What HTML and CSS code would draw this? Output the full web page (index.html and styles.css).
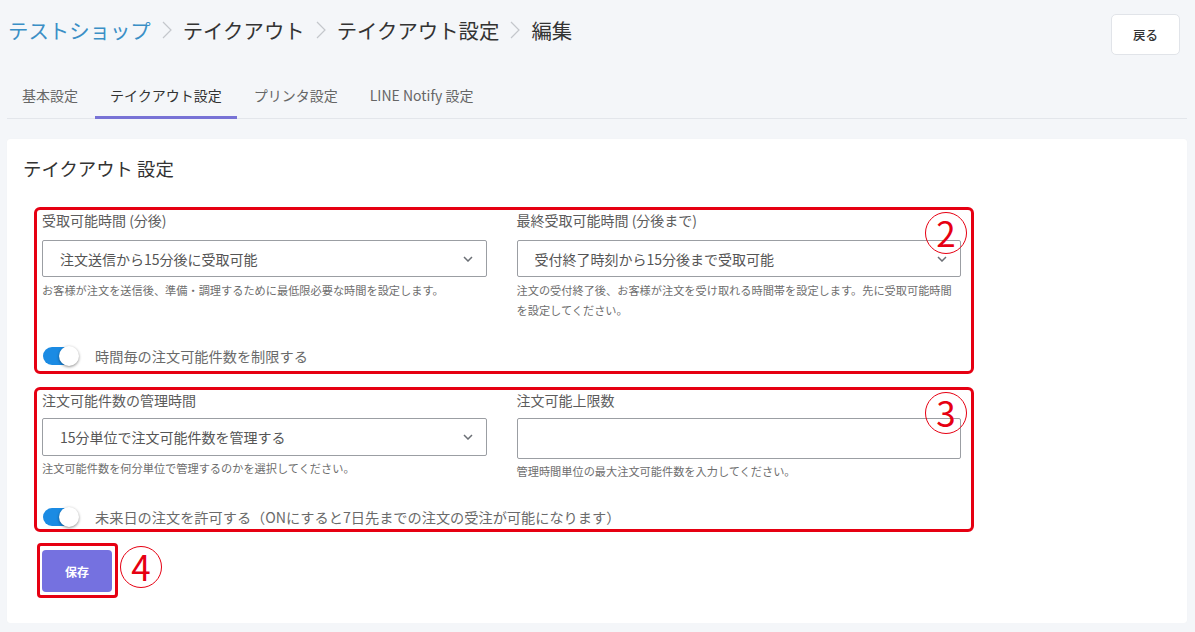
FILE: index.html
```html
<!DOCTYPE html>
<html lang="ja">
<head>
<meta charset="utf-8">
<title>テイクアウト設定 編集</title>
<link rel="stylesheet" href="styles.css">
</head>
<body>
<div class="page">
  <header class="header">
    <nav class="crumbs">
      <a class="crumb crumb--link">テストショップ</a>
      <svg class="crumb-sep" width="12" height="22" viewBox="0 0 12 22"><polyline points="2,3 10,11 2,19" fill="none" stroke="#c4c7cc" stroke-width="1.2"/></svg>
      <span class="crumb">テイクアウト</span>
      <svg class="crumb-sep" width="12" height="22" viewBox="0 0 12 22"><polyline points="2,3 10,11 2,19" fill="none" stroke="#c4c7cc" stroke-width="1.2"/></svg>
      <span class="crumb">テイクアウト設定</span>
      <svg class="crumb-sep" width="12" height="22" viewBox="0 0 12 22"><polyline points="2,3 10,11 2,19" fill="none" stroke="#c4c7cc" stroke-width="1.2"/></svg>
      <span class="crumb">編集</span>
    </nav>
    <button class="back-btn">戻る</button>
  </header>

  <div class="tabs">
    <a class="tab">基本設定</a>
    <a class="tab tab--active">テイクアウト設定</a>
    <a class="tab">プリンタ設定</a>
    <a class="tab">LINE Notify 設定</a>
  </div>

  <section class="card">
    <h2 class="card-title">テイクアウト 設定</h2>

    <div class="mark mark--a">
      <div class="cols">
        <div class="field">
          <label class="label">受取可能時間 (分後)</label>
          <div class="select">
            <span>注文送信から15分後に受取可能</span>
            <svg class="chev" width="10" height="6" viewBox="0 0 10 6"><polyline points="1,1 5,5 9,1" fill="none" stroke="#6b6f75" stroke-width="1.5"/></svg>
          </div>
          <p class="help">お客様が注文を送信後、準備・調理するために最低限必要な時間を設定します。</p>
        </div>
        <div class="field">
          <label class="label">最終受取可能時間 (分後まで)</label>
          <div class="select">
            <span>受付終了時刻から15分後まで受取可能</span>
            <svg class="chev" width="10" height="6" viewBox="0 0 10 6"><polyline points="1,1 5,5 9,1" fill="none" stroke="#6b6f75" stroke-width="1.5"/></svg>
          </div>
          <p class="help">注文の受付終了後、お客様が注文を受け取れる時間帯を設定します。先に受取可能時間を設定してください。</p>
        </div>
      </div>
      <div class="toggle-row">
        <span class="toggle"><span class="knob"></span></span>
        <span class="toggle-label">時間毎の注文可能件数を制限する</span>
      </div>
      <div class="num">2</div>
    </div>

    <div class="mark mark--b">
      <div class="cols">
        <div class="field">
          <label class="label">注文可能件数の管理時間</label>
          <div class="select select--b">
            <span>15分単位で注文可能件数を管理する</span>
            <svg class="chev" width="10" height="6" viewBox="0 0 10 6"><polyline points="1,1 5,5 9,1" fill="none" stroke="#6b6f75" stroke-width="1.5"/></svg>
          </div>
          <p class="help">注文可能件数を何分単位で管理するのかを選択してください。</p>
        </div>
        <div class="field">
          <label class="label">注文可能上限数</label>
          <input class="input" type="text">
          <p class="help">管理時間単位の最大注文可能件数を入力してください。</p>
        </div>
      </div>
      <div class="toggle-row">
        <span class="toggle"><span class="knob"></span></span>
        <span class="toggle-label">未来日の注文を許可する（ONにすると7日先までの注文の受注が可能になります）</span>
      </div>
      <div class="num">3</div>
    </div>

    <div class="save-row">
      <div class="mark-save">
        <button class="save-btn">保存</button>
      </div>
      <div class="num num--inline">4</div>
    </div>
  </section>
</div>
</body>
</html>
```

FILE: styles.css
```css
* { box-sizing: border-box; }

html, body {
  margin: 0;
  padding: 0;
}

body {
  background: #f4f6f9;
  font-family: "Noto Sans CJK JP", "Noto Sans", sans-serif;
  color: #333;
}

.page {
  padding: 0 8px 0 7px;
}

.header {
  display: flex;
  justify-content: space-between;
  align-items: flex-start;
  padding-top: 14px;
  padding-right: 7px;
}

.crumbs {
  display: flex;
  align-items: center;
  padding-top: 2px;
  padding-left: 1px;
  font-size: 20.4px;
  line-height: 28px;
}

.crumb {
  color: #333;
  text-decoration: none;
}

.crumb--link {
  color: #3a8fc6;
}

.crumb-sep {
  margin: 0 10px 0 10px;
}

.back-btn {
  width: 69px;
  height: 41px;
  background: #fff;
  border: 1px solid #e1e4e9;
  border-radius: 5px;
  font-family: inherit;
  font-size: 12.5px;
  font-weight: 500;
  color: #333;
  padding: 0;
}

.tabs {
  display: flex;
  margin-top: 20px;
  border-bottom: 1px solid #e3e6eb;
}

.tab {
  font-size: 14px;
  line-height: 20px;
  padding: 10px 15px 11px;
  margin-right: 2px;
  color: #666;
  border-bottom: 3px solid transparent;
  margin-bottom: -1px;
}

.tab--active {
  color: #333;
  border-bottom-color: #7873d6;
}

.card {
  margin-top: 20px;
  background: #fff;
  border-radius: 3px;
  padding: 17px 16px 25px;
  box-shadow: 0 0 1px rgba(0, 0, 0, 0.06);
}

.card-title {
  margin: 0 0 27px;
  font-size: 18.4px;
  line-height: 24px;
  font-weight: 400;
  color: #333;
}

.mark {
  position: relative;
  margin-left: 11px;
  width: 940px;
  border: 3px solid #e60012;
  border-radius: 6px;
  padding: 0 10px 5px 5px;
}

.mark--b {
  margin-top: 13px;
  padding-bottom: 2px;
}

.cols {
  display: grid;
  grid-template-columns: 1fr 1fr;
  column-gap: 30px;
}

.field {
  display: flex;
  flex-direction: column;
}

.label {
  font-size: 14px;
  line-height: 20px;
  color: #5c5c5c;
}

.select {
  margin-top: 10px;
  height: 37px;
  border: 1px solid #9b9ea3;
  border-radius: 2px;
  display: flex;
  align-items: center;
  justify-content: space-between;
  padding: 0 13px 0 17px;
  font-size: 14px;
  color: #555;
}

.select--b {
  margin-top: 8px;
  height: 38px;
}

.chev {
  display: block;
}

.input {
  margin-top: 8px;
  height: 41px;
  border: 1px solid #9b9ea3;
  border-radius: 2px;
  background: #fff;
  width: 100%;
}

.help {
  margin: 3px 0 0;
  font-size: 11.2px;
  line-height: 20px;
  color: #6e6e6e;
}

.mark--b .help {
  margin-top: 2px;
}

.toggle-row {
  display: flex;
  align-items: center;
  margin-top: 26px;
  height: 20px;
}

.toggle {
  position: relative;
  width: 35px;
  height: 18px;
  margin-left: 1px;
  border-radius: 9px;
  background: #1b8be3;
}

.knob {
  position: absolute;
  right: -1px;
  top: -1px;
  width: 20px;
  height: 20px;
  border-radius: 50%;
  background: #fff;
  box-shadow: 0 1px 3px rgba(0, 0, 0, 0.45);
}

.toggle-label {
  margin-left: 17px;
  font-size: 14.2px;
  color: #6a6a6a;
}

.num {
  position: absolute;
  top: 2px;
  right: 4px;
  width: 42px;
  height: 42px;
  border: 1.5px solid #e60012;
  border-radius: 50%;
  color: #e60012;
  font-family: "Noto Sans CJK JP", sans-serif;
  font-size: 35px;
  font-weight: 400;
  line-height: 38px;
  text-align: center;
  background: transparent;
}

.save-row {
  display: flex;
  align-items: flex-start;
  margin-top: 11px;
  margin-left: 14px;
  gap: 2px;
}

.mark-save {
  border: 3px solid #e60012;
  border-radius: 4px;
  padding: 4px 3px 3px 2px;
}

.save-btn {
  display: block;
  width: 70px;
  height: 42px;
  border: none;
  border-radius: 4px;
  background: #7571e0;
  color: #fff;
  font-family: inherit;
  font-size: 12px;
  font-weight: 700;
}

.num--inline {
  position: static;
  margin-top: 3px;
}
```
